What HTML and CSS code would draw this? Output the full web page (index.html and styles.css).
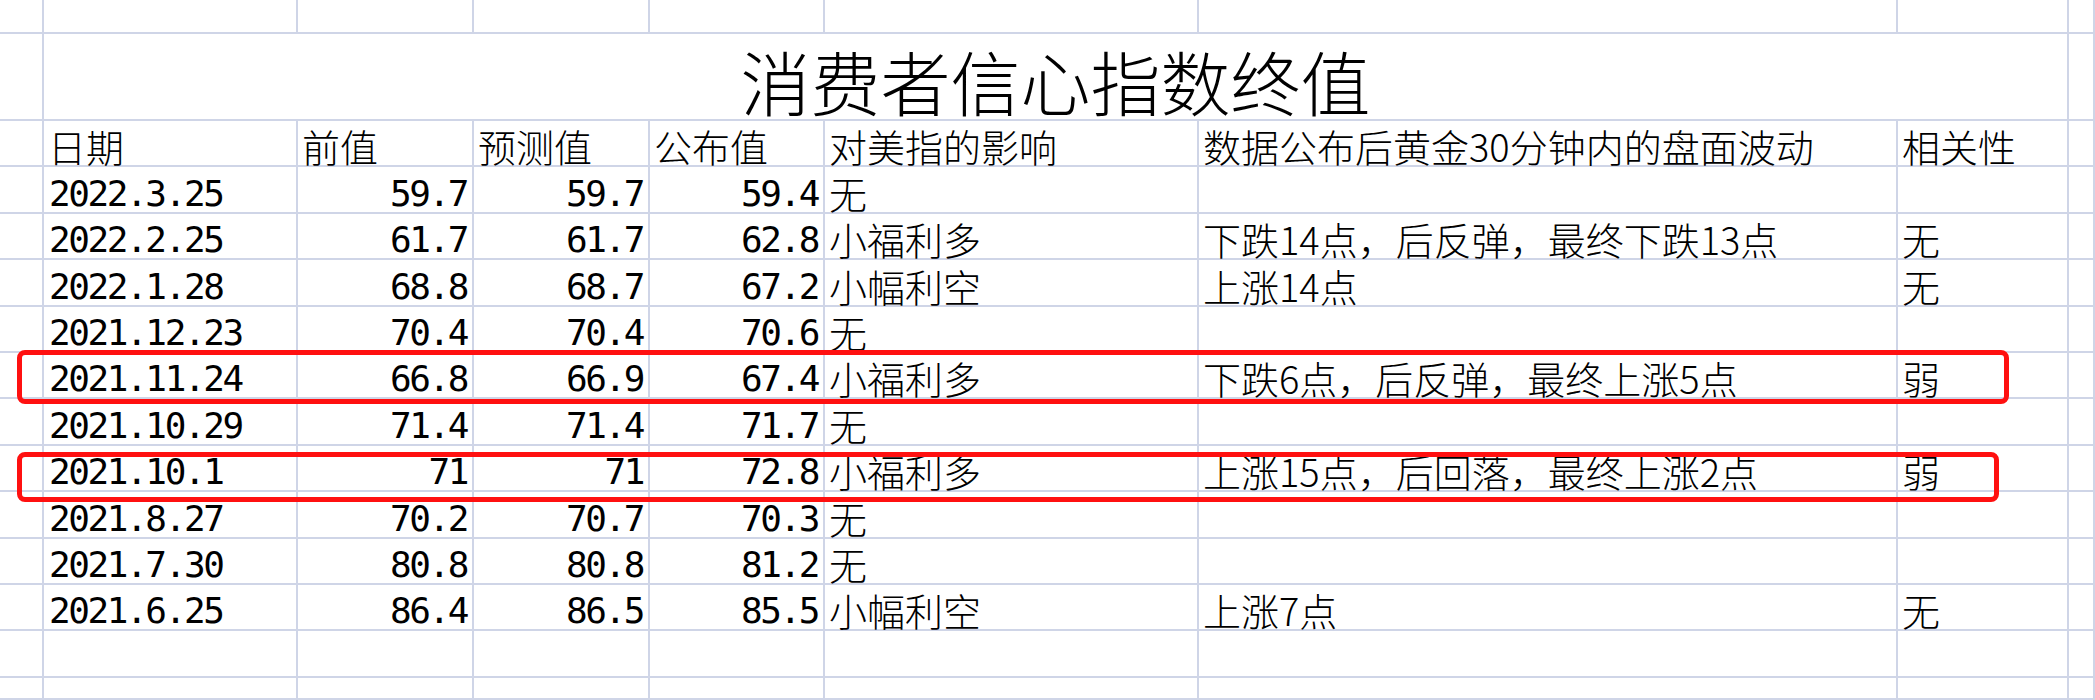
FILE: index.html
```html
<!DOCTYPE html>
<html lang="zh-CN">
<head>
<meta charset="utf-8">
<title>消费者信心指数终值</title>
<link rel="stylesheet" href="styles.css">
</head>
<body>
<div class="page">
  <div class="sheet">
    <!-- partial top row -->
    <div class="c"></div><div class="c"></div><div class="c"></div><div class="c"></div><div class="c"></div><div class="c"></div><div class="c"></div><div class="c"></div><div class="c"></div>

    <!-- title row -->
    <div class="c"></div>
    <div class="c title">消费者信心指数终值</div>
    <div class="c"></div>

    <!-- header -->
    <div class="c"></div>
    <div class="c txt">日期</div>
    <div class="c txt">前值</div>
    <div class="c txt">预测值</div>
    <div class="c txt">公布值</div>
    <div class="c txt">对美指的影响</div>
    <div class="c txt">数据公布后黄金30分钟内的盘面波动</div>
    <div class="c txt">相关性</div>
    <div class="c"></div>

    <div class="c"></div><div class="c date">2022.3.25</div><div class="c num">59.7</div><div class="c num">59.7</div><div class="c num">59.4</div><div class="c txt">无</div><div class="c txt"></div><div class="c txt"></div><div class="c"></div>
    <div class="c"></div><div class="c date">2022.2.25</div><div class="c num">61.7</div><div class="c num">61.7</div><div class="c num">62.8</div><div class="c txt">小福利多</div><div class="c txt">下跌14点，后反弹，最终下跌13点</div><div class="c txt">无</div><div class="c"></div>
    <div class="c"></div><div class="c date">2022.1.28</div><div class="c num">68.8</div><div class="c num">68.7</div><div class="c num">67.2</div><div class="c txt">小幅利空</div><div class="c txt">上涨14点</div><div class="c txt">无</div><div class="c"></div>
    <div class="c"></div><div class="c date">2021.12.23</div><div class="c num">70.4</div><div class="c num">70.4</div><div class="c num">70.6</div><div class="c txt">无</div><div class="c txt"></div><div class="c txt"></div><div class="c"></div>
    <div class="c"></div><div class="c date">2021.11.24</div><div class="c num">66.8</div><div class="c num">66.9</div><div class="c num">67.4</div><div class="c txt">小福利多</div><div class="c txt">下跌6点，后反弹，最终上涨5点</div><div class="c txt">弱</div><div class="c"></div>
    <div class="c"></div><div class="c date">2021.10.29</div><div class="c num">71.4</div><div class="c num">71.4</div><div class="c num">71.7</div><div class="c txt">无</div><div class="c txt"></div><div class="c txt"></div><div class="c"></div>
    <div class="c"></div><div class="c date">2021.10.1</div><div class="c num">71</div><div class="c num">71</div><div class="c num">72.8</div><div class="c txt">小福利多</div><div class="c txt">上涨15点，后回落，最终上涨2点</div><div class="c txt">弱</div><div class="c"></div>
    <div class="c"></div><div class="c date">2021.8.27</div><div class="c num">70.2</div><div class="c num">70.7</div><div class="c num">70.3</div><div class="c txt">无</div><div class="c txt"></div><div class="c txt"></div><div class="c"></div>
    <div class="c"></div><div class="c date">2021.7.30</div><div class="c num">80.8</div><div class="c num">80.8</div><div class="c num">81.2</div><div class="c txt">无</div><div class="c txt"></div><div class="c txt"></div><div class="c"></div>
    <div class="c"></div><div class="c date">2021.6.25</div><div class="c num">86.4</div><div class="c num">86.5</div><div class="c num">85.5</div><div class="c txt">小幅利空</div><div class="c txt">上涨7点</div><div class="c txt">无</div><div class="c"></div>

    <!-- empty rows -->
    <div class="c"></div><div class="c"></div><div class="c"></div><div class="c"></div><div class="c"></div><div class="c"></div><div class="c"></div><div class="c"></div><div class="c"></div>
    <div class="c"></div><div class="c"></div><div class="c"></div><div class="c"></div><div class="c"></div><div class="c"></div><div class="c"></div><div class="c"></div><div class="c"></div>
  </div>

  <div class="mark mark-1"></div>
  <div class="mark mark-2"></div>
</div>
</body>
</html>
```

FILE: styles.css
```css
html, body {
  margin: 0;
  padding: 0;
  background: #ffffff;
}

.page {
  position: relative;
  width: 2095px;
  height: 700px;
  overflow: hidden;
  background: #ffffff;
}

.sheet {
  display: grid;
  grid-template-columns: 44px 254px 176px 176px 175px 374px 699px 171px 1fr;
  grid-template-rows: 34px 87px repeat(12, 46.4px) 1fr;
  height: 700px;
  color: #000000;
}

.c {
  box-sizing: border-box;
  border-right: 2px solid #cfd5e7;
  border-bottom: 2px solid #cfd5e7;
  display: flex;
  align-items: flex-end;
  min-width: 0;
  white-space: nowrap;
}

.title {
  grid-column: 2 / 9;
  justify-content: center;
  font-family: "Noto Sans CJK SC", sans-serif;
  font-weight: 300;
  font-size: 70px;
  line-height: 1;
  padding-bottom: 3px;
}

.txt {
  font-family: "Noto Sans CJK SC", sans-serif;
  font-weight: 300;
  font-size: 38px;
  line-height: 1;
  padding-left: 4px;
}

.date,
.num {
  font-family: "DejaVu Sans Mono", monospace;
  font-size: 36px;
  letter-spacing: -2.4px;
  line-height: 1;
}

.date {
  padding-left: 5px;
}

.num {
  justify-content: flex-end;
  padding-right: 5px;
}

.mark {
  position: absolute;
  box-sizing: border-box;
  border: 5px solid #ff1010;
  border-radius: 8px;
}

.mark-1 {
  left: 17px;
  top: 350px;
  width: 1992px;
  height: 54px;
}

.mark-2 {
  left: 17px;
  top: 452px;
  width: 1982px;
  height: 50px;
}
```
